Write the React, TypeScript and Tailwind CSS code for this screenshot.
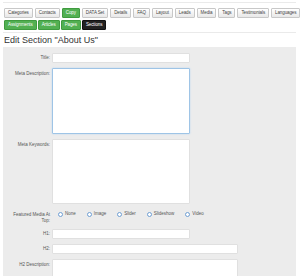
import React from 'react';

const tabs = [
  { label: 'Categories' },
  { label: 'Contacts' },
  { label: 'Copy', active: true },
  { label: 'DATA Set' },
  { label: 'Details' },
  { label: 'FAQ' },
  { label: 'Layout' },
  { label: 'Leads' },
  { label: 'Media' },
  { label: 'Tags' },
  { label: 'Testimonials' },
  { label: 'Languages' },
];

const subTabs = [
  { label: 'Assignments', kind: 'green' },
  { label: 'Articles', kind: 'green' },
  { label: 'Pages', kind: 'green' },
  { label: 'Sections', kind: 'dark' },
];

function Tab({ label, kind }: { label: string; kind?: string }) {
  const base =
    'h-[10px] px-[3px] flex items-center whitespace-nowrap rounded-[1px] border text-[4.5px] tracking-[-0.1px] leading-none';
  if (kind === 'green')
    return <div className={`${base} bg-[#52b052] border-[#3f9a3f] text-white`}>{label}</div>;
  if (kind === 'dark')
    return <div className={`${base} bg-[#222] border-[#111] text-white`}>{label}</div>;
  return (
    <div className={`${base} bg-gradient-to-b from-white to-[#e8e8e8] border-[#c8c8c8] text-[#444]`}>{label}</div>
  );
}

function Row({ label, children, top }: { label: React.ReactNode; children: React.ReactNode; top?: boolean }) {
  return (
    <div className={`flex ${top ? 'items-start' : 'items-center'}`}>
      <div className={`w-[49px] pr-[2px] text-right text-[4.5px] leading-[6px] text-[#555] ${top ? 'pt-[3px]' : ''}`}>
        {label}
      </div>
      {children}
    </div>
  );
}

export default function App() {
  return (
    <div className="w-[300px] h-[276px] bg-white overflow-hidden" style={{ fontFamily: '"Liberation Sans", Arial, sans-serif' }}>
      <div className="mx-[3px] mt-[2px] w-[293px] border-t border-b border-[#eaeaea] pt-[5px] pb-[2px]">
        <div className="flex gap-[2px] px-[1px]">
          {tabs.map((t) => (
            <Tab key={t.label} label={t.label} kind={t.active ? 'green' : undefined} />
          ))}
        </div>
        <div className="flex gap-[1px] px-[1px] mt-[2px]">
          {subTabs.map((t) => (
            <Tab key={t.label} label={t.label} kind={t.kind} />
          ))}
        </div>
      </div>
      <h1 className="ml-[4px] mt-[2px] text-[9px] leading-[10px] text-[#333]">Edit Section "About Us"</h1>
      <div className="mx-[3px] mt-[2px] w-[293px] h-[240px] bg-[#ececec] pt-[6px] flex flex-col gap-[5px]">
        <Row label="Title:">
          <div className="w-[138px] h-[10px] bg-white border border-[#e0e0e0] rounded-[1px]" />
        </Row>
        <Row label="Meta Description:" top>
          <div className="w-[138px] h-[66px] bg-white border border-[#9ec4e6] rounded-[1px] shadow-[0_0_2px_#b8d6f0]" />
        </Row>
        <Row label="Meta Keywords:" top>
          <div className="w-[138px] h-[65px] bg-white border border-[#e0e0e0] rounded-[1px]" />
        </Row>
        <Row label={<>Featured Media At<br />Top:</>} top>
          <div className="flex items-center gap-[11px] pl-[6px] pt-[2px] text-[4.5px] text-[#555]">
            {['None', 'Image', 'Slider', 'Slideshow', 'Video'].map((o) => (
              <div key={o} className="flex items-center gap-[2px]">
                <span className="w-[5px] h-[5px] rounded-full border border-[#6f9fd3] bg-white" />
                {o}
              </div>
            ))}
          </div>
        </Row>
        <Row label="H1:">
          <div className="w-[138px] h-[10px] bg-white border border-[#e0e0e0] rounded-[1px]" />
        </Row>
        <Row label="H2:">
          <div className="w-[186px] h-[10px] bg-white border border-[#e0e0e0] rounded-[1px]" />
        </Row>
        <Row label="H2 Description:" top>
          <div className="w-[186px] h-[40px] bg-white border border-[#e0e0e0] rounded-[1px]" />
        </Row>
      </div>
    </div>
  );
}
